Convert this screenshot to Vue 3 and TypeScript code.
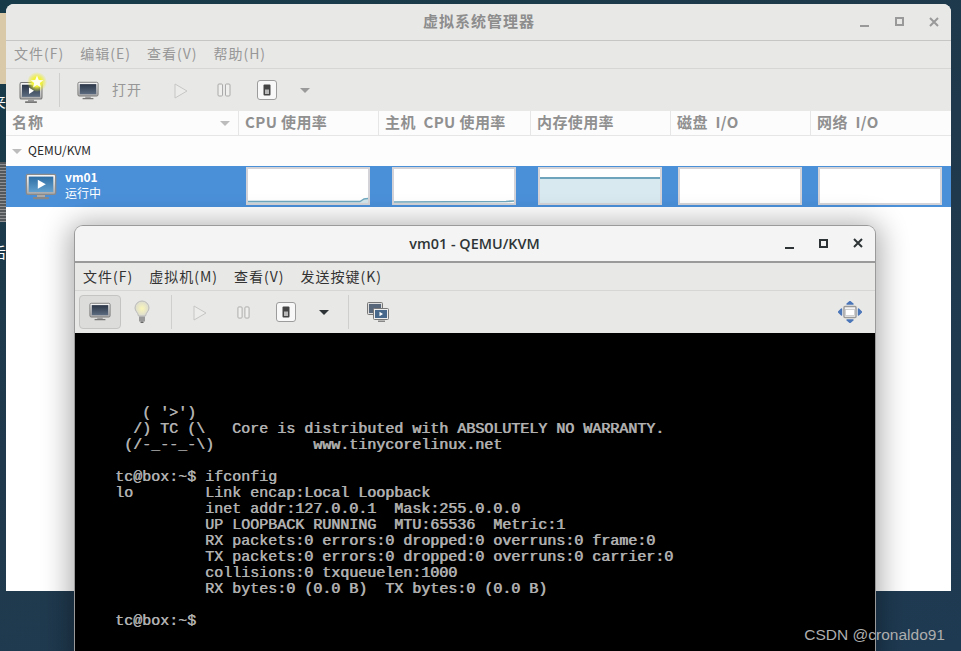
<script setup lang="ts">
const terminalLines: string[] = [
  "   ( '>')",
  "  /) TC (\\   Core is distributed with ABSOLUTELY NO WARRANTY.",
  " (/-_--_-\\)           www.tinycorelinux.net",
  "",
  "tc@box:~$ ifconfig",
  "lo        Link encap:Local Loopback",
  "          inet addr:127.0.0.1  Mask:255.0.0.0",
  "          UP LOOPBACK RUNNING  MTU:65536  Metric:1",
  "          RX packets:0 errors:0 dropped:0 overruns:0 frame:0",
  "          TX packets:0 errors:0 dropped:0 overruns:0 carrier:0",
  "          collisions:0 txqueuelen:1000",
  "          RX bytes:0 (0.0 B)  TX bytes:0 (0.0 B)",
  "",
  "tc@box:~$ "
];

const mainMenus = ["文件(F)", "编辑(E)", "查看(V)", "帮助(H)"];
const vmMenus = ["文件(F)", "虚拟机(M)", "查看(V)", "发送按键(K)"];
const columns = ["CPU 使用率", "主机  CPU 使用率", "内存使用率", "磁盘  I/O", "网络  I/O"];
const graphs = ["cpu", "host", "mem", "disk", "net"];
</script>

<template>
  <div class="desktop">
    <svg class="defs" width="0" height="0" aria-hidden="true">
      <defs>
        <linearGradient id="scr" x1="0" y1="0" x2="0" y2="1">
          <stop offset="0" stop-color="#2b3648" />
          <stop offset="1" stop-color="#5d6c80" />
        </linearGradient>
        <linearGradient id="scrBlue" x1="0" y1="0" x2="0" y2="1">
          <stop offset="0" stop-color="#2f6ea3" />
          <stop offset="1" stop-color="#62a0cf" />
        </linearGradient>
        <linearGradient id="frame" x1="0" y1="0" x2="0" y2="1">
          <stop offset="0" stop-color="#fafafa" />
          <stop offset="1" stop-color="#a8a8a8" />
        </linearGradient>
        <radialGradient id="bulbGlow">
          <stop offset="0" stop-color="#fbf7b8" />
          <stop offset="1" stop-color="#dcdcd0" />
        </radialGradient>
        <radialGradient id="starGlow">
          <stop offset="0.45" stop-color="#f2f23a" />
          <stop offset="1" stop-color="#e8e840" stop-opacity="0" />
        </radialGradient>
        <symbol id="monitor" viewBox="0 0 24 20">
          <rect x="1" y="0.5" width="22" height="15" rx="1.5" fill="url(#frame)" stroke="#777" />
          <rect x="3" y="2.5" width="18" height="11" fill="url(#scr)" />
          <rect x="9" y="16" width="6" height="1.6" fill="#999" />
          <rect x="6" y="17.5" width="12" height="1.6" rx=".6" fill="#777" />
        </symbol>
        <symbol id="play" viewBox="0 0 14 16">
          <path d="M1 1 L13 8 L1 15 Z" fill="#ececea" stroke="#c6c6c4" stroke-width="1" />
        </symbol>
        <symbol id="pause" viewBox="0 0 14 14">
          <rect x="1" y="1" width="4.5" height="12" rx="1" fill="#efefed" stroke="#aaa" />
          <rect x="8.5" y="1" width="4.5" height="12" rx="1" fill="#efefed" stroke="#aaa" />
        </symbol>
        <symbol id="switch" viewBox="0 0 20 20">
          <rect x=".5" y=".5" width="19" height="19" rx="2.5" fill="#f8f8f8" stroke="#9c9c9c" />
          <rect x="6.5" y="4.5" width="7" height="11" rx="1" fill="#444" />
          <rect x="8" y="9.5" width="4" height="4.5" fill="#b8b8b8" />
        </symbol>
      </defs>
    </svg>

    <div class="wall-beige"></div>
    <div class="wall-can"></div>
    <span class="wall-text t1">夹</span>
    <span class="wall-text t2">后</span>

    <section class="manager">
      <header class="m-title">
        <span class="m-title-text">虚拟系统管理器</span>
        <div class="controls m-controls">
          <span class="c-min"></span>
          <span class="c-max"></span>
          <span class="c-close">
            <svg width="10" height="10" viewBox="0 0 10 10"><path d="M1 1 L9 9 M9 1 L1 9" stroke="currentColor" stroke-width="2" /></svg>
          </span>
        </div>
      </header>
      <nav class="menu m-menu">
        <span v-for="m in mainMenus" :key="m">{{ m }}</span>
      </nav>
      <div class="m-tools">
        <span class="new-vm">
          <svg width="24" height="22" viewBox="0 0 24 20" preserveAspectRatio="none">
            <use href="#monitor" />
            <path d="M10 5 L15 8 L10 11 Z" fill="#fff" />
          </svg>
          <svg class="star" width="20" height="20" viewBox="0 0 20 20">
            <circle cx="10" cy="10" r="10" fill="url(#starGlow)" />
            <path d="M10 3.5 L11.8 8 L16.4 8.2 L12.8 11 L14 15.6 L10 13 L6 15.6 L7.2 11 L3.6 8.2 L8.2 8 Z" fill="#fffef0" />
          </svg>
        </span>
        <i class="sep first-sep"></i>
        <svg class="t-open" width="22" height="20"><use href="#monitor" /></svg>
        <span class="open-label">打开</span>
        <svg class="t-play" width="14" height="16"><use href="#play" /></svg>
        <svg class="t-pause" width="14" height="14"><use href="#pause" /></svg>
        <svg class="t-switch" width="20" height="20"><use href="#switch" /></svg>
        <span class="arrow grey"></span>
      </div>

      <div class="head grid">
        <div class="hcell name">
          <span class="name-label">名称</span><span class="arrow light"></span>
        </div>
        <div v-for="c in columns" :key="c" class="hcell">{{ c }}</div>
      </div>
      <div class="group">
        <span class="arrow light small"></span>
        <span>QEMU/KVM</span>
      </div>
      <div class="row grid">
        <div class="vm">
          <svg class="vm-icon" width="32" height="28" viewBox="0 0 24 20">
            <rect x="1" y="0.5" width="22" height="15" rx="1.2" fill="url(#frame)" stroke="#8a8a8a" />
            <rect x="2.8" y="2.2" width="18.4" height="11.6" fill="url(#scrBlue)" />
            <path d="M9.6 4.6 L15.6 8 L9.6 11.4 Z" fill="#fff" />
            <rect x="9" y="16" width="6" height="1.6" fill="#aaa" />
            <rect x="6" y="17.5" width="12" height="1.6" rx=".6" fill="#888" />
          </svg>
          <div class="vm-text">
            <strong>vm01</strong>
            <span>运行中</span>
          </div>
        </div>
        <div v-for="g in graphs" :key="g" class="gcell" :class="'gc-' + g">
          <div class="graph" :class="'g-' + g">
            <svg v-if="g === 'cpu' || g === 'host'" width="120" height="34" viewBox="0 0 120 34" class="trace">
              <path v-if="g === 'cpu'" d="M0 33 L112 33 L116 30.5 L120 30 L120 34 L0 34 Z" fill="#d3e5ec" />
              <path v-if="g === 'cpu'" d="M0 32.5 L112 32.5 L116 30 L120 29.5" fill="none" stroke="#6fa8bf" stroke-width="1.4" />
              <path v-else d="M0 33 L112 32.5 L120 32" fill="none" stroke="#6fa8bf" stroke-width="1.6" />
            </svg>
          </div>
        </div>
      </div>
      <div class="rest"></div>
    </section>

    <section class="vm-window">
      <header class="v-title">
        <span class="v-title-text">vm01 - QEMU/KVM</span>
        <div class="controls v-controls">
          <span class="c-min"></span>
          <span class="c-max"></span>
          <span class="c-close">
            <svg width="10" height="10" viewBox="0 0 10 10"><path d="M1 1 L9 9 M9 1 L1 9" stroke="currentColor" stroke-width="2" /></svg>
          </span>
        </div>
      </header>
      <nav class="menu v-menu">
        <span v-for="m in vmMenus" :key="m">{{ m }}</span>
      </nav>
      <div class="v-tools">
        <span class="pressed"><svg width="22" height="20"><use href="#monitor" /></svg></span>
        <svg class="v-bulb" width="16" height="24" viewBox="0 0 16 24">
          <path d="M8 1 A7 7 0 0 1 15 8 C15 11 12 12.5 11.5 16 L4.5 16 C4 12.5 1 11 1 8 A7 7 0 0 1 8 1 Z" fill="url(#bulbGlow)" stroke="#bbb" />
          <rect x="5" y="16.5" width="6" height="5" fill="#999" />
          <rect x="6.5" y="21.5" width="3" height="1.5" fill="#666" />
        </svg>
        <i class="sep v-sep1"></i>
        <svg class="v-play" width="14" height="16"><use href="#play" /></svg>
        <svg class="v-pause" width="13" height="13"><use href="#pause" /></svg>
        <svg class="v-switch" width="20" height="20"><use href="#switch" /></svg>
        <span class="arrow dark"></span>
        <i class="sep v-sep2"></i>
        <svg class="v-multi" width="22" height="21" viewBox="0 0 22 21">
          <rect x=".5" y=".5" width="15" height="12" rx="1" fill="#dcdcdc" stroke="#777" />
          <rect x="2" y="2" width="12" height="9" fill="#58687a" />
          <rect x="6.5" y="6.5" width="15" height="11" rx="1" fill="#eee" stroke="#777" />
          <rect x="8" y="8" width="12" height="8" fill="#47688a" />
          <path d="M12.5 9.8 L16 12 L12.5 14.2 Z" fill="#fff" />
          <rect x="11" y="18.5" width="7" height="1.5" fill="#888" />
        </svg>
        <svg class="v-full" width="24" height="22" viewBox="0 0 24 22">
          <path d="M12 .5 L15 3 L9 3 Z M12 21.5 L15 19 L9 19 Z M.5 11 L3.5 8 L3.5 14 Z M23.5 11 L20.5 8 L20.5 14 Z" fill="#4a76b8" stroke="#4a76b8" stroke-linejoin="round" stroke-width="1.4" />
          <rect x="6" y="5.5" width="12" height="11" rx="1" fill="#f4f4f4" stroke="#9a9a9a" stroke-width="1.4" />
          <rect x="7.5" y="8.5" width="9" height="6" fill="#fff" stroke="#c8c8c8" stroke-width=".8" />
        </svg>
      </div>
      <pre class="terminal">{{ terminalLines.join("\n") }}</pre>
    </section>

    <span class="watermark">CSDN @cronaldo91</span>
  </div>
</template>

<style>
html, body { margin: 0; background: #1f3a4e; }
</style>

<style scoped>
.desktop {
  position: relative;
  width: 961px;
  height: 651px;
  overflow: hidden;
  box-sizing: border-box;
  padding: 4px 10px 60px 6px;
  background: linear-gradient(160deg, #173b49 0%, #20394c 45%, #1e3a52 100%);
  font-family: "Noto Sans CJK SC", "Liberation Sans", sans-serif;
}
.defs { position: absolute; }
.wall-beige { position: absolute; left: 0; top: 13px; width: 6px; height: 71px; background: #d9c9a8; }
.wall-can { position: absolute; left: 0; top: 162px; width: 6px; height: 60px; background: repeating-linear-gradient(0deg, #8f9192 0 1px, #55585a 1px 3px); }
.wall-text { position: absolute; left: -9px; color: #fff; font-size: 15px; line-height: 16px; }
.t1 { top: 93px; }
.t2 { top: 244px; }

.manager {
  display: flex;
  flex-direction: column;
  height: 587px;
  background: #fff;
  border-radius: 8px 8px 0 0;
  overflow: hidden;
}
.m-title {
  position: relative;
  flex: 0 0 37px;
  box-sizing: border-box;
  padding-bottom: 3px;
  display: flex;
  align-items: center;
  justify-content: center;
  background: #e8e8e6;
  border-bottom: 1px solid #c6c6c4;
}
.m-title-text { font-size: 15px; font-weight: 700; letter-spacing: 1px; color: #8d8d8d; margin-left: 1px; }
.controls { position: absolute; top: 0; bottom: 0; display: flex; align-items: center; }
.m-controls { left: 854px; color: #999; }
.v-controls { left: 710px; color: #2e3436; }
.c-min, .c-max, .c-close { position: relative; display: block; box-sizing: border-box; }
.c-min { width: 9px; height: 2px; background: currentColor; margin-top: 8px; margin-right: 26px; }
.v-controls .c-min { margin-right: 25px; }
.c-max { width: 9px; height: 9px; border: 2px solid currentColor; margin-right: 25px; margin-top: -1px; }
.c-close { width: 10px; height: 10px; margin-top: -1px; }
.c-close svg { display: block; }

.menu { display: flex; align-items: center; font-size: 14px; letter-spacing: 1px; }
.m-menu { flex: 0 0 28px; box-sizing: border-box; padding: 0 0 3px 8px; gap: 16px; color: #979797; background: #e8e8e6; border-bottom: 1px solid #d6d6d4; }

.m-tools {
  flex: 0 0 42px;
  display: flex;
  align-items: center;
  padding-left: 13px;
  background: #e8e8e6;
}
.new-vm { position: relative; display: block; width: 24px; height: 22px; margin-top: 6px; }
.new-vm svg { display: block; }
.new-vm .star { position: absolute; left: 8px; top: -10px; }
.sep { display: block; width: 1px; height: 34px; background: #cfcfcd; }
.first-sep { margin: 0 17px 0 16px; }
.t-open { display: block; margin-top: 1px; }
.open-label { margin: 0 0 3px 13px; font-size: 14px; letter-spacing: 1px; color: #979797; }
.t-play { margin-left: 32px; margin-top: 1px; }
.t-pause { margin-left: 29px; }
.t-switch { margin-left: 26px; }

.arrow { display: block; width: 0; height: 0; border-left: 5px solid transparent; border-right: 5px solid transparent; border-top: 5px solid #9a9a9a; }
.arrow.grey { margin-left: 23px; }
.arrow.light { border-top-color: #bcbcbc; }
.arrow.small { margin-right: 6px; }
.arrow.dark { margin-left: 23px; border-top-color: #2e3436; }

.grid { display: grid; grid-template-columns: 232px 140px 152px 140px 140px 141px; }
.head { flex: 0 0 25px; box-sizing: border-box; background: #fcfcfc; border-bottom: 1px solid #e6e6e6; }
.hcell {
  box-sizing: border-box;
  padding-left: 6px;
  border-left: 1px solid #e6e6e6;
  font-size: 15px;
  font-weight: 700;
  line-height: 21px;
  letter-spacing: .4px;
  color: #909090;
  white-space: pre;
}
.hcell.name { display: flex; align-items: flex-start; justify-content: space-between; padding: 0 8px 0 6px; border-left: 0; letter-spacing: 1px; line-height: 21px; }
.hcell.name .arrow { margin-top: 10px; }
.group {
  flex: 0 0 30px;
  box-sizing: border-box;
  padding: 0 0 3px 6px;
  display: flex;
  align-items: center;
  font-size: 12px;
  color: #2a2a2a;
  background: #fdfdfd;
}
.group .arrow { margin-top: 3px; }
.row { flex: 0 0 41px; background: #4a90d9; }
.vm { display: flex; align-items: center; padding-left: 19px; color: #fff; }
.vm-icon { display: block; margin-top: 1px; }
.vm-text { display: flex; flex-direction: column; margin: -3px 0 0 8px; font-size: 12px; line-height: 16px; }
.vm-text strong { font-size: 12px; }
.gcell { padding: 1px 0 2px 8px; }
.gc-host { padding-left: 14px; }
.graph {
  position: relative;
  box-sizing: border-box;
  width: 124px;
  height: 38px;
  background: #fff;
  border: 2px solid #d4d4d8;
  overflow: hidden;
}
.trace { display: block; position: absolute; left: 0; bottom: 0; }
.g-mem { background: linear-gradient(#fff 0 8px, #6fa4bd 8px 10px, #d9e9f0 10px 100%); }
.rest { flex: 1; background: #fff; }

.vm-window {
  position: absolute;
  left: 75px;
  top: 226px;
  width: 800px;
  height: 440px;
  display: flex;
  flex-direction: column;
  background: #e8e8e6;
  border-radius: 8px 8px 0 0;
  box-shadow: 0 0 0 1px #9a9a9a, 0 3px 28px 6px rgba(0, 0, 0, 0.32);
}
.v-title {
  position: relative;
  flex: 0 0 37px;
  display: flex;
  align-items: center;
  justify-content: center;
  background: #f4f4f4;
  border-bottom: 2px solid #9a9a9a;
  border-radius: 8px 8px 0 0;
  box-sizing: border-box;
}
.v-title-text { font-family: "Open Sans", "Liberation Sans", sans-serif; font-size: 14.4px; font-weight: 600; color: #2e3436; margin-right: 1px; }
.v-menu { flex: 0 0 28px; box-sizing: border-box; padding: 0 0 1px 8px; gap: 16px; color: #333; border-bottom: 1px solid #d6d6d4; }
.v-tools {
  position: relative;
  flex: 0 0 42px;
  display: flex;
  align-items: center;
  padding-left: 4px;
}
.pressed {
  display: flex;
  align-items: center;
  justify-content: center;
  box-sizing: border-box;
  width: 42px;
  height: 34px;
  background: #dcdcda;
  border: 1px solid #c4c4c2;
  border-radius: 4px;
}
.pressed svg { display: block; }
.v-bulb { margin-left: 13px; }
.v-sep1 { margin-left: 21px; }
.v-play { margin-left: 21px; margin-top: 1px; }
.v-pause { margin-left: 30px; }
.v-switch { margin-left: 26px; }
.v-sep2 { margin-left: 19px; }
.v-multi { margin-left: 18px; margin-top: 1px; }
.v-full { margin-left: auto; margin-right: 13px; }
.terminal {
  flex: 1;
  margin: 0;
  box-sizing: border-box;
  padding: 73px 0 0 40px;
  background: #000;
  color: #b0b0b0;
  font-family: "Liberation Mono", monospace;
  font-weight: 400;
  font-size: 15px;
  line-height: 16px;
  text-shadow: .6px 0 #b0b0b0;
  white-space: pre;
}
.watermark {
  position: absolute;
  right: 16px;
  top: 626px;
  font-family: "Liberation Sans", sans-serif;
  font-size: 15.5px;
  line-height: 18px;
  color: #aeaeae;
}
</style>
